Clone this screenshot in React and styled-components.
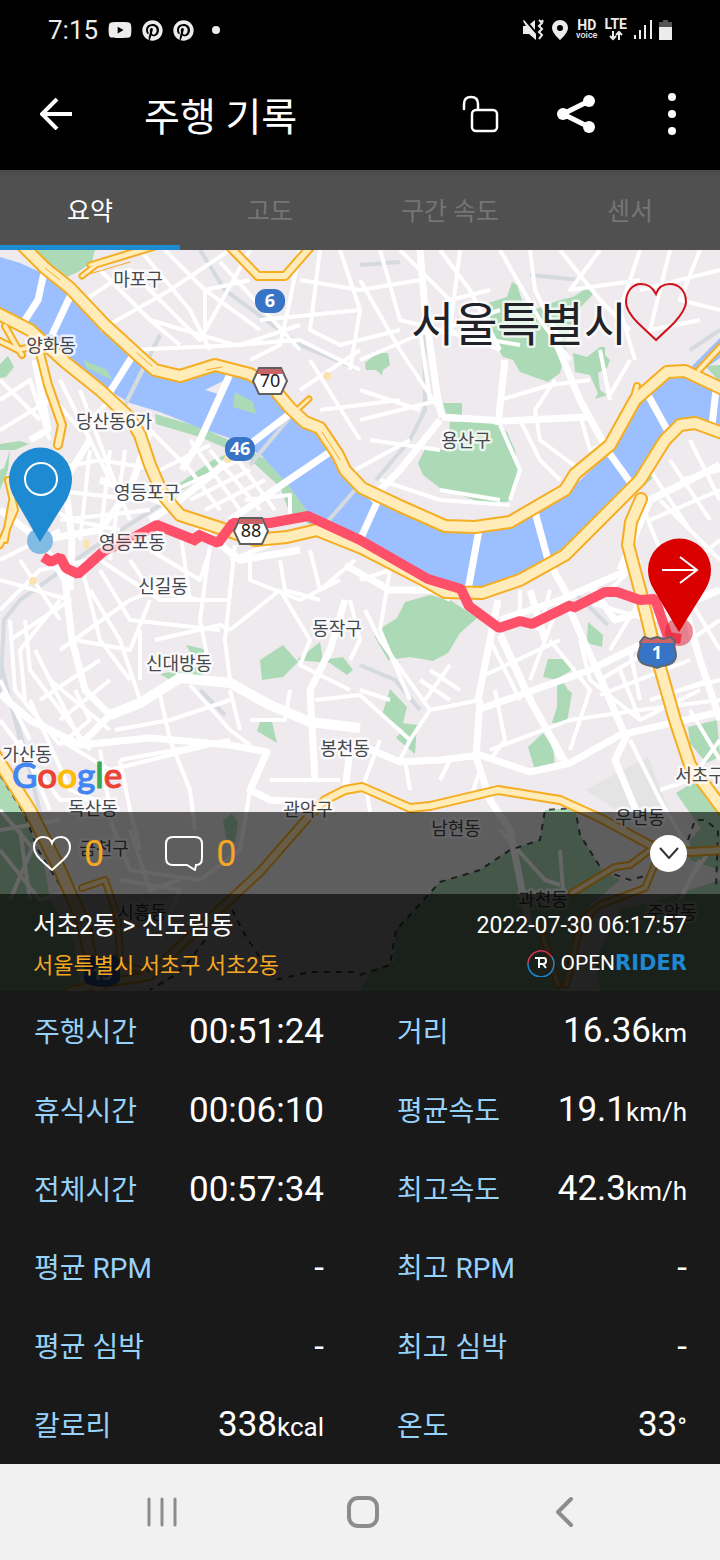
import React from "react";
import styled, { createGlobalStyle } from "styled-components";
import { FaPinterest, FaYoutube } from "react-icons/fa";

const GlobalStyle = createGlobalStyle`
  *, *::before, *::after { box-sizing: border-box; }
  body {
    margin: 0;
    background: #191919;
    color: #fff;
    font-family: Roboto, "Noto Sans CJK KR", sans-serif;
  }
  button { font: inherit; color: inherit; background: none; border: 0; padding: 0; cursor: pointer; }
  svg { display: block; }
`;

const Page = styled.div`
  min-height: 100vh;
  display: flex;
  flex-direction: column;
`;

/* ---------- status bar ---------- */

const StatusBar = styled.div`
  height: 60px;
  padding: 0 48px;
  display: flex;
  align-items: center;
  justify-content: space-between;
  background: #000;
  color: #ececec;
`;

const StatusGroup = styled.div`
  display: flex;
  align-items: center;
  gap: ${(p) => p.$gap}px;
`;

const Clock = styled.span`
  font-size: 26px;
  line-height: 32px;
`;

const Dot = styled.span`
  width: 8px;
  height: 8px;
  margin-left: 8px;
  border-radius: 50%;
  background: currentColor;
`;

const NetBadge = styled.span`
  display: flex;
  flex-direction: column;
  align-items: center;
  font-size: 14px;
  line-height: 11px;
  font-weight: 700;
`;

const NetSmall = styled.span`
  font-size: 9px;
  line-height: 9px;
  font-weight: 500;
`;

/* ---------- app bar ---------- */

const AppBar = styled.header`
  height: 110px;
  padding-bottom: 2px;
  display: flex;
  align-items: center;
  background: #000;
`;

const BarButton = styled.button`
  width: ${(p) => p.$width || 96}px;
  height: 96px;
  display: flex;
  align-items: center;
  justify-content: center;
`;

const Title = styled.h1`
  flex: 1;
  margin: 0;
  padding: 8px 0 0 32px;
  font-size: 39px;
  line-height: 56px;
  font-weight: 400;
`;

/* ---------- tabs ---------- */

const Tabs = styled.nav`
  display: grid;
  grid-template-columns: repeat(4, 1fr);
  height: 80px;
  background: linear-gradient(#4a4a4a, #505050 8px);
`;

const Tab = styled.button`
  padding-top: 9px;
  font-size: 25px;
  line-height: 32px;
  color: ${(p) => (p.$active ? "#fff" : "#757575")};
  border-bottom: 5px solid ${(p) => (p.$active ? "#1d8bd1" : "transparent")};
`;

/* ---------- map ---------- */

const MapSection = styled.section`
  position: relative;
  padding-top: 562px;
  overflow: hidden;
`;

const MapCanvas = styled.svg`
  position: absolute;
  inset: 0;
  width: 100%;
  height: 100%;
`;

const ActionBar = styled.div`
  position: relative;
  height: 82px;
  padding: 0 33px;
  display: flex;
  align-items: center;
  gap: 61px;
  background: rgba(0, 0, 0, 0.6);
`;

const CountButton = styled.button`
  display: flex;
  align-items: center;
  gap: 13px;
  color: #f5a623;
  font-size: 36px;
`;

const Count = styled.span`
  padding-top: 2px;
  line-height: 44px;
`;

const CollapseButton = styled.button`
  width: 37px;
  height: 37px;
  margin-left: auto;
  display: grid;
  place-items: center;
  border-radius: 50%;
  background: #fff;
`;

const RideInfo = styled.div`
  position: relative;
  height: 97px;
  padding: 12px 33px 5px;
  display: flex;
  flex-direction: column;
  background: rgba(0, 0, 0, 0.85);
`;

const InfoRow = styled.div`
  flex: 1;
  display: flex;
  align-items: center;
  justify-content: space-between;
`;

const Course = styled.span`
  font-size: 25px;
  line-height: 36px;
`;

const RideDate = styled.time`
  font-size: 23px;
  line-height: 36px;
`;

const Address = styled.span`
  font-size: 22px;
  line-height: 32px;
  color: #f5a623;
`;

const Brand = styled.span`
  display: flex;
  align-items: center;
  padding-bottom: 6px;
  font-size: 21px;
  line-height: 28px;
`;

const BrandOpen = styled.span`
  margin-left: 5px;
`;

const BrandRider = styled.span`
  font-family: "DejaVu Sans", sans-serif;
  font-weight: 700;
  color: #1e88d2;
`;

/* ---------- stats ---------- */

const Stats = styled.dl`
  flex: 1;
  margin: 0;
  padding: 0 33px 0 34px;
  display: grid;
  grid-template-columns: 1fr 1fr;
  grid-auto-rows: minmax(64px, 1fr);
  column-gap: 73px;
  background: #191919;
`;

const Stat = styled.div`
  display: flex;
  align-items: center;
  justify-content: space-between;
  padding-top: 3px;
`;

const StatLabel = styled.dt`
  padding-top: 2px;
  font-size: 28px;
  line-height: 40px;
  color: #97d2fb;
`;

const StatValue = styled.dd`
  margin: 0;
  font-size: 35px;
  line-height: 44px;
`;

const Unit = styled.span`
  font-size: 26px;
`;

/* ---------- system navigation ---------- */

const SystemNav = styled.nav`
  height: 96px;
  padding: 0 55px 0 61px;
  display: grid;
  grid-template-columns: repeat(3, 1fr);
  background: #f1f1f1;
`;

const NavButton = styled.button`
  display: grid;
  place-items: center;
`;

/* ---------- map data ---------- */

const PARKS = [
  "26,250 95,250 92,262 78,272 60,280 42,262",
  "450,422 493,421 507,432 515,450 518,470 513,497 507,502 483,503 440,488 423,475 418,463 425,449 448,450",
  "512,282 517,285 522,300 533,310 560,300 573,297 587,288 595,292 580,308 577,317 567,337 565,353 560,373 548,382 520,372 513,360 503,357 493,340 488,303 507,297",
  "365,363 377,353 388,353 390,365 383,370 382,375 376,370 366,370",
  "443,403 462,403 462,417 447,417",
  "573,353 587,357 600,347 605,347 605,355 610,360 607,368 598,373 600,390 607,395 595,399 598,393 590,375 575,372",
  "155,414 200,427 233,442 260,457 287,483 308,512 290,514 280,487 247,457 200,437 156,424",
  "180,483 213,460 230,453 200,480 182,490",
  "375,632 397,618 405,602 430,595 450,600 477,618 460,633 448,653 433,661 410,657 388,660 375,637",
  "390,689 407,707 403,723 417,725 415,754 396,738 403,730 382,715",
  "548,659 567,659 572,670 560,677 568,690 572,693 567,722 552,723 557,707 557,680 543,677",
  "588,622 603,635 602,647 587,643",
  "543,733 553,747 555,767 535,770 528,747",
  "688,727 717,720 720,757 706,763 690,743",
  "676,793 697,780 720,803 720,830 702,830",
  "186,645 208,650 200,655 190,652",
  "160,674 200,666 204,677 172,681",
  "260,660 283,645 298,662 283,677 262,680",
  "297,660 320,642 323,660 343,657 353,670 347,675 330,663",
  "260,722 272,722 277,743 257,731",
  "0,364 8,356 14,367 6,377 0,378",
  "0,444 20,441 29,444 15,450 0,450",
  "10,450 4,468 0,470 0,490 8,470",
  "0,775 25,815 45,870 50,900 72,935 82,991 0,991",
  "223,820 232,814 238,822 235,843 226,838",
  "370,972 394,962 396,930 420,905 440,882 480,870 510,850 540,840 545,810 575,808 580,835 602,870 620,880 590,905 560,991 360,991",
  "620,910 660,900 720,880 720,991 600,991 595,960",
  "690,840 710,818 720,825 720,870 690,860",
  "705,366 720,365 720,382",
];

const RIVER =
  "0,257 20,263 40,272 60,282 80,300 130,347 148,370 180,380 220,368 250,380 275,398 290,415 318,432 338,465 358,490 400,510 445,530 475,530 510,525 570,490 612,450 635,405 667,376 690,378 720,392 720,428 692,420 674,432 650,470 600,518 562,548 520,574 482,588 455,586 425,574 360,536 310,515 290,487 262,456 235,440 200,428 160,412 130,403 100,385 65,355 30,328 0,313";

const MAIN_ROADS = [
  "45,268 38,300 25,320", "73,290 52,335", "135,352 108,395", "230,374 200,440 182,470",
  "292,412 240,452 180,500 150,520", "330,452 280,486 230,520", "378,500 360,540", "479,530 468,590",
  "535,512 548,560 570,600", "607,450 630,482", "648,395 670,435", "716,390 712,425",
  "420,250 425,310 438,400 442,417", "505,360 498,425", "442,417 505,421 590,417", "555,340 580,400 610,455",
  "0,510 40,540 65,580 72,640 85,690 110,715 140,703 180,678 230,683 270,705 310,722 360,728",
  "70,590 72,540 65,480 90,440", "110,715 80,745 30,720 0,694", "80,745 150,738 230,745",
  "230,745 267,752 250,790 270,800 310,802", "345,600 330,650 310,690 315,780",
  "360,745 400,762 440,760 480,755 530,772 570,763 620,735 720,712",
  "480,700 476,757 490,800 510,830 520,880 530,930", "477,710 520,695 590,670 640,645",
  "500,635 530,700 567,765", "570,610 610,700 625,735", "590,585 615,620 650,610",
  "627,735 615,760 640,820", "720,590 650,620 690,600 720,590", "680,590 700,660 720,720",
  "498,600 490,640 478,700", "500,620 560,600 640,565", "530,590 545,640", "35,360 48,430 30,440",
  "150,430 130,490 100,530 40,540", "370,500 400,470 440,420", "350,750 345,790",
  "100,480 170,505 240,560 300,550", "460,590 390,590 345,565", "720,465 650,500 620,570",
];

const ROADS = [
  "85,300 130,270 200,340 250,250", "100,330 170,290 230,250", "140,250 190,310 210,350",
  "100,270 150,320 180,345", "150,320 235,345 300,340 360,370", "130,350 240,345 300,325",
  "165,250 205,290 260,330", "205,330 205,290 250,280", "220,262 300,350", "300,250 290,300 280,345 250,360",
  "260,320 360,310", "320,250 310,330 340,345 400,330", "300,280 360,290 420,280", "340,250 360,310 350,370",
  "360,280 400,350 440,410", "380,250 400,320 440,330 500,310", "400,250 450,300 490,290", "440,250 470,290 500,350",
  "460,250 450,330 500,350", "500,250 540,320 570,360", "530,250 535,290 560,340", "560,250 600,300 630,330",
  "600,250 570,290 640,280", "640,250 620,310 635,360", "670,250 650,330 700,320", "720,270 640,290", "700,250 680,300 720,310",
  "360,360 430,330 520,345", "360,390 420,410", "360,420 440,400", "370,440 440,450", "355,470 410,440", "310,360 360,440",
  "300,390 360,350", "320,410 400,400", "500,400 550,385 590,380", "555,380 535,410 540,440 580,470",
  "520,420 540,460 560,480", "500,425 520,470 510,500", "600,350 610,400", "580,415 590,450 615,440", "610,395 630,360",
  "420,330 430,400", "440,490 500,500", "380,480 440,500 510,505",
  "0,400 30,380 50,440", "0,430 50,400", "0,380 40,420", "60,380 110,480", "80,390 110,470 130,520",
  "55,400 80,430 110,400", "50,470 100,460 160,470", "50,490 140,500", "60,520 150,510", "90,450 80,540", "110,450 100,540",
  "125,450 110,560", "40,500 70,520 120,530", "150,430 190,470 220,510", "160,470 210,445", "175,490 240,460",
  "190,500 250,470", "205,510 265,480", "190,440 240,510", "210,450 260,510", "230,450 275,510", "245,500 290,495 290,515",
  "0,560 60,530", "0,580 70,600 10,640", "20,560 60,620", "0,610 40,570 90,560", "10,620 15,690 60,745", "25,620 30,670 90,750",
  "60,600 20,650 25,700", "80,560 100,640 130,680", "90,590 120,640 140,700", "100,570 130,620 220,630", "60,650 130,600 180,580",
  "75,640 130,650 150,600", "100,560 160,600 230,600", "130,560 150,590 200,600", "150,550 200,580 210,550", "140,630 140,680",
  "155,640 220,625 230,630", "210,545 200,620 210,670", "180,530 190,600", "235,545 225,640 230,680", "250,550 250,580 300,600 340,580",
  "280,590 230,630", "280,590 310,640 300,665 350,690", "280,560 285,590 320,600", "310,550 320,590 355,560", "270,545 230,560",
  "50,680 110,730", "60,720 110,680", "75,690 90,720 60,745", "40,700 100,660", "35,650 80,740", "115,730 170,720 230,700",
  "60,740 110,770 230,740", "120,760 230,740", "120,760 130,810 140,850", "160,695 170,740 190,790 195,830", "100,750 110,810",
  "190,685 230,730 250,745", "230,690 240,730", "290,690 285,720 250,720", "315,700 360,695 410,740", "350,600 360,640 350,660",
  "270,780 340,780", "250,790 240,850 200,880", "0,720 60,800 100,800", "20,740 50,810", "30,700 70,790 120,810", "0,680 30,740",
  "360,580 390,570 380,630 410,700", "365,610 380,640 430,710 480,700", "375,560 450,600", "430,670 460,690", "420,680 450,700", "450,665 425,700",
  "430,710 410,740 400,760", "360,690 390,700", "380,740 365,780 370,812", "405,760 410,790", "450,760 440,780",
  "485,675 560,640", "490,640 520,700", "500,630 560,760", "495,690 505,740 490,760", "490,750 570,720 640,710 720,700", "530,680 560,600",
  "520,590 520,620 540,630 550,590", "550,640 590,690 570,750", "580,640 590,680 640,720", "600,600 640,560", "580,600 650,620", "640,600 610,650",
  "620,670 640,720 700,690", "600,695 690,660", "600,680 650,650", "630,650 640,700", "660,690 680,720", "650,700 710,680", "690,640 720,620",
  "695,560 720,540", "650,520 720,490", "660,500 720,560", "650,470 690,530", "670,460 710,520", "690,440 720,500", "680,480 720,470",
  "660,550 640,500", "690,600 720,650", "680,690 720,680", "690,710 720,760", "480,770 470,800", "720,740 690,780 660,790", "630,740 660,800 690,850",
  "0,830 60,820", "0,850 40,900 100,880", "20,830 30,900", "40,830 10,900", "0,810 60,880", "130,830 150,890 180,880", "110,820 130,870 200,880",
  "120,880 180,890 160,940", "500,830 545,880 560,885", "560,850 563,890", "690,880 710,850 720,845", "680,900 700,860",
];

const HIGHWAYS = [
  { w: 14, d: "M22 245L45 268 70 288 105 325 140 357 155 370 180 376 215 365 250 374 275 390 290 408 305 422 320 428 338 455 345 470 362 488 400 506 445 526 475 527 510 522 565 490 575 474 610 445 635 400 667 372 685 371 725 390" },
  { w: 14, d: "M-5 312L30 330 65 362 100 390 130 418 140 435 150 465 163 495 180 515 220 528 255 540 287 537 317 530 362 548 420 578 445 592 482 593 520 580 565 555 600 520 640 480 665 440 680 425 695 423 725 434" },
  { w: 14, d: "M641 499L631 522 628 545 640 590 655 650 675 720 690 765 725 812" },
  { w: 10, d: "M70 991L100 984 150 976 165 960 260 872 310 815 325 800 345 790 362 787 410 808 430 806 498 790 560 800 600 818 650 845 690 852 725 850" },
  { w: 14, d: "M-5 755L30 810 60 870 82 920 98 991" },
  { w: 10, d: "M38 345L48 385 62 425 58 445" },
  { w: 8, d: "M5 326L14 342 22 355" },
  { w: 8, d: "M0 341L18 350 40 345" },
  { w: 10, d: "M228 245L258 276 285 276 312 245" },
  { w: 7, d: "M82 276L96 265 155 247" },
  { w: 7, d: "M90 265L145 248" },
  { w: 8, d: "M699 370L725 342" },
  { w: 8, d: "M637 386L633 400" },
  { w: 7, d: "M299 408L309 399" },
  { w: 8, d: "M0 545L15 510 8 480M5 540L14 490" },
  { w: 8, d: "M572 893L615 867 630 865 650 850M575 925L600 905 645 888 658 857M566 985L578 935 590 915M541 930L558 985" },
  { w: 8, d: "M82 888L105 880 118 918 120 960M145 972L118 962 100 991" },
];

const BORDERS = [
  "M0 775L25 815 38 850 60 885 90 920 100 991",
  "M360 975L390 965 396 930 440 882 480 870 510 850 540 840 545 810 575 808 580 835 602 870 630 880 655 873",
  "M232 910L245 935 275 980 310 972 360 972M205 940L190 960 175 975 150 990",
  "M688 840L695 820 705 820 718 830 716 890",
];

const RAILWAYS = [
  "0,700 4,620 20,600 90,550 160,505", "12,700 40,812", "200,250 225,290 300,345 360,370", "160,335 125,405",
  "424,300 425,410 410,440 376,480", "290,417 250,465", "355,490 320,530", "0,660 10,700 20,740", "360,665 395,680 420,710", "200,690 225,715",
  "360,265 400,262", "530,275 580,280", "690,350 720,330", "577,595 608,625",
];

const ROUTE =
  "M43 557L51 562 60 557 66 568 78 574 104 551 133 538 157 525 197 541 197 534 218 543 233 523 270 523 308 516 360 540 428 579 461 589 469 606 499 628 520 621 532 624 571 605 573 608 605 592 617 592 640 600 655 599 668 637 681 639";

const PLACES = [
  [138, 286, "마포구"], [51, 352, "양화동"], [114, 428, "당산동6가"], [147, 499, "영등포구"],
  [132, 549, "영등포동"], [163, 593, "신길동"], [337, 635, "동작구"], [179, 670, "신대방동"],
  [345, 755, "봉천동"], [27, 761, "가산동"], [93, 815, "독산동"], [308, 816, "관악구"],
  [456, 835, "남현동"], [640, 824, "우면동"], [104, 855, "금천구"], [142, 919, "시흥동"],
  [543, 906, "과천동"], [672, 919, "주암동"], [700, 782, "서초구"], [466, 447, "용산구"],
];

const Label = styled.text`
  font-family: "Noto Sans CJK KR", sans-serif;
  font-size: ${(p) => p.$size || 18}px;
  fill: ${(p) => (p.$size ? "#202227" : "#44474e")};
  stroke: rgba(255, 255, 255, 0.75);
  stroke-width: 5px;
  stroke-linejoin: round;
  paint-order: stroke;
  text-anchor: middle;
`;

const ShieldText = styled.text`
  font-family: "Noto Sans", sans-serif;
  font-size: 18px;
  font-weight: ${(p) => (p.$dark ? 400 : 700)};
  fill: ${(p) => (p.$dark ? "#222" : "#fff")};
  text-anchor: middle;
`;

const Logo = styled.text`
  font-family: Lato, sans-serif;
  font-size: 35px;
  font-weight: 500;
`;

const LogoLetter = styled.tspan`
  fill: ${(p) => p.$color};
  stroke: ${(p) => p.$color};
  stroke-width: 1px;
`;

const LOGO_LETTERS = [
  ["G", "#4285f4"], ["o", "#ea4335"], ["o", "#fbbc05"], ["g", "#4285f4"], ["l", "#34a853"], ["e", "#ea4335"],
];

function OvalShield({ x, y, children }) {
  return (
    <g>
      <rect x={x - 15} y={y - 12} width="30" height="24" rx="11" fill="#3874c6" />
      <ShieldText x={x} y={y + 6}>{children}</ShieldText>
    </g>
  );
}

function HexShield({ x, y, children }) {
  return (
    <g>
      <g transform={`translate(${x} ${y})`}>
        <path d="M-17 0L-11 -13H11L17 0 11 13H-11Z" fill="#fff" stroke="#606060" strokeWidth="2" />
        <path d="M-13 -7L-11 -12H11L13 -7Z" fill="#cb6466" />
      </g>
      <ShieldText $dark x={x} y={y + 6}>{children}</ShieldText>
    </g>
  );
}

function RideMap() {
  return (
    <MapCanvas viewBox="0 250 720 741" preserveAspectRatio="xMidYMid slice" role="img" aria-label="주행 경로 지도">
      <rect y="250" width="720" height="741" fill="#eeeaee" />
      <path d="M585 790L648 757 670 812 620 812Z" fill="#e4e4e4" />
      {PARKS.map((p) => <polygon key={p} points={p} fill="#acdab6" />)}
      <polyline points="230,444 262,462 290,492 310,520 425,578 482,590 562,552 650,475" fill="none" stroke="#acdab6" strokeWidth="8" />
      <polygon points={RIVER} fill="#9cc0ff" />
      <polygon points="690,368 720,338 720,358 700,372" fill="#9cc0ff" />
      <polygon points="83,360 107,370 112,380 87,368" fill="#acdab6" />
      <polygon points="235,392 253,402 256,414 233,407" fill="#acdab6" />
      <polygon points="205,390 225,380 218,394" fill="#eeeaee" />
      <g fill="none" stroke="#d5dade" strokeWidth="4">
        {RAILWAYS.map((p) => <polyline key={p} points={p} />)}
      </g>
      <g fill="none" stroke="#fff" strokeLinejoin="round">
        <g strokeWidth="4">{ROADS.map((p) => <polyline key={p} points={p} />)}</g>
        <g strokeWidth="7">{MAIN_ROADS.map((p) => <polyline key={p} points={p} />)}</g>
        <path d="M110 715L140 703 180 678 230 683 270 705 310 722 360 728" strokeWidth="10" />
      </g>
      <g fill="none" stroke="#454b52" strokeWidth="2" strokeDasharray="6 6">
        {BORDERS.map((d) => <path key={d} d={d} />)}
      </g>
      <g fill="none" strokeLinejoin="round" strokeLinecap="round">
        {HIGHWAYS.map((h) => <path key={h.d} d={h.d} stroke="#f6ad22" strokeWidth={h.w} />)}
        {HIGHWAYS.map((h) => <path key={h.d} d={h.d} stroke="#ffecb8" strokeWidth={h.w - 4} />)}
        <path d="M137 353L152 366M206 370L222 367M322 432L340 460M86 275L130 262M45 268L60 280" stroke="#f6ad22" strokeWidth="1" />
      </g>
      <g fill="#fbe3b0">
        <circle cx="327" cy="376" r="4" /><circle cx="228" cy="459" r="4" />
        <circle cx="33" cy="581" r="4" /><rect x="84" y="540" width="5" height="8" />
      </g>

      <circle cx="40" cy="541" r="13" fill="#81bbe4" />
      <path d={ROUTE} fill="none" stroke="#ff5069" strokeWidth="10" strokeLinejoin="bevel" />

      {PLACES.map(([x, y, name]) => <Label key={name} x={x} y={y}>{name}</Label>)}
      <Label $size={47} x="519" y="341">서울특별시</Label>

      <OvalShield x={270} y={301}>6</OvalShield>
      <OvalShield x={240} y={449}>46</OvalShield>
      <HexShield x={270} y={381}>70</HexShield>
      <HexShield x={251} y={531}>88</HexShield>
      <path d="M85 958L90 955 102 958 114 955 120 960 120 980Q118 986 102 987Q86 986 84 980Z" fill="#3874c6" />
      <ShieldText x="102" y="980">15</ShieldText>
      <circle cx="679" cy="632" r="14" fill="#d9182e" fillOpacity="0.5" />
      <path d="M640 642L644 637 650 639 657 637 664 639 671 637 675 642C673 646 676 650 676 656Q675 665 662 666L657 668 652 666Q639 665 638 656C638 650 642 646 640 642Z" fill="#3874c6" stroke="#5e6670" strokeWidth="2" />
      <path d="M641 642L645 638 651 640 657 638 663 640 670 638 674 642 673 643H642Z" fill="#cb6466" />
      <ShieldText x="657" y="659">1</ShieldText>

      <path d="M40 542L15 499C11 492 9 486 9 479A31 31 0 0 1 72 479C72 486 70 492 67 499Z" fill="#1e8ad1" />
      <circle cx="41" cy="479" r="16" fill="none" stroke="#fff" strokeWidth="2" />
      <path d="M679 632L654 590C650 583 648 577 648 570A31 31 0 0 1 711 570C711 577 709 583 705 590Z" fill="#db0000" />
      <path d="M662 570H697M680 557L697 570 680 583" fill="none" stroke="#fff" strokeWidth="2" />
      <path d="M656 340L638 323C629 314 626 308 626 302C626 291 633 284 641 284C648 284 653 288 656 294C658 288 663 284 670 284C679 284 686 291 686 302C686 308 682 314 674 323Z" fill="none" stroke="#d0101c" strokeWidth="2" />

      <Logo x="12" y="788">
        {LOGO_LETTERS.map(([letter, color], i) => <LogoLetter key={i} $color={color}>{letter}</LogoLetter>)}
      </Logo>
    </MapCanvas>
  );
}

const TABS = ["요약", "고도", "구간 속도", "센서"];

const STATS = [
  ["주행시간", "00:51:24"], ["거리", "16.36", "km"],
  ["휴식시간", "00:06:10"], ["평균속도", "19.1", "km/h"],
  ["전체시간", "00:57:34"], ["최고속도", "42.3", "km/h"],
  ["평균 RPM", "-"], ["최고 RPM", "-"],
  ["평균 심박", "-"], ["최고 심박", "-"],
  ["칼로리", "338", "kcal"], ["온도", "33", "°"],
];

export default function App() {
  return (
    <Page>
      <GlobalStyle />
      <StatusBar>
        <StatusGroup $gap={10}>
          <Clock>7:15</Clock>
          <FaYoutube size={24} />
          <FaPinterest size={21} />
          <FaPinterest size={21} />
          <Dot />
        </StatusGroup>
        <StatusGroup $gap={7}>
          <svg width="22" height="22" viewBox="0 0 22 22" fill="currentColor">
            <path d="M1 7H4L1 2 2 1 14 15V21L7 15H1ZM8 5L13 1V11Z" />
            <path d="M17 1L20 4 17 7 20 10 17 13 20 16 17 20M20 1L21 3" fill="none" stroke="currentColor" strokeWidth="2" />
          </svg>
          <svg width="18" height="22" viewBox="0 0 18 22" fill="currentColor">
            <path fillRule="evenodd" d="M9 1A8 8 0 0 1 17 9C17 14 9 21 9 21S1 14 1 9A8 8 0 0 1 9 1ZM9 6A3 3 0 1 0 9 12A3 3 0 1 0 9 6Z" />
          </svg>
          <NetBadge>
            HD
            <NetSmall>voice</NetSmall>
          </NetBadge>
          <NetBadge>
            LTE
            <svg width="14" height="11" viewBox="0 0 14 11" fill="none" stroke="currentColor" strokeWidth="2">
              <path d="M4 1V9M1 6L4 9 7 6M10 10V2M7 5L10 2 13 5" />
            </svg>
          </NetBadge>
          <svg width="18" height="20" viewBox="0 0 18 20" fill="currentColor">
            <path d="M0 15H2V19H0ZM5 10H7V19H5ZM10 5H12V19H10ZM16 0H18V19H16Z" />
          </svg>
          <svg width="13" height="22" viewBox="0 0 13 22">
            <path d="M4 1H9V3H13V9H0V3H4Z" fill="#555" />
            <path d="M0 8H13V21H0Z" fill="currentColor" />
          </svg>
        </StatusGroup>
      </StatusBar>

      <AppBar>
        <BarButton $width={112} aria-label="뒤로">
          <svg width="32" height="32" viewBox="0 0 32 32" fill="none" stroke="#fff" strokeWidth="4">
            <path d="M32 16H3M17 1L2 16 17 31" />
          </svg>
        </BarButton>
        <Title>주행 기록</Title>
        <BarButton aria-label="잠금 해제">
          <svg width="38" height="38" viewBox="0 0 38 38" fill="none" stroke="#fff" strokeWidth="2.5" strokeLinecap="round">
            <path d="M3 14V9C3 4 6 2 10 2S17 4 17 9V14" />
            <rect x="11" y="15" width="25" height="21" rx="4" />
          </svg>
        </BarButton>
        <BarButton aria-label="공유">
          <svg width="38" height="38" viewBox="0 0 38 38" fill="#fff">
            <path d="M32 6L6 19 32 32" fill="none" stroke="#fff" strokeWidth="5" />
            <circle cx="32" cy="6" r="6" /><circle cx="6" cy="19" r="6" /><circle cx="32" cy="32" r="6" />
          </svg>
        </BarButton>
        <BarButton aria-label="더보기">
          <svg width="8" height="42" viewBox="0 0 8 42" fill="#fff">
            <circle cx="4" cy="4" r="4" /><circle cx="4" cy="21" r="4" /><circle cx="4" cy="38" r="4" />
          </svg>
        </BarButton>
      </AppBar>

      <Tabs>
        {TABS.map((name, i) => (
          <Tab key={name} $active={i === 0} aria-current={i === 0 ? "page" : undefined}>{name}</Tab>
        ))}
      </Tabs>

      <MapSection>
        <RideMap />
        <ActionBar>
          <CountButton aria-label="좋아요 0">
            <svg width="38" height="35" viewBox="0 0 38 35" fill="none" stroke="#fff" strokeWidth="2">
              <path d="M19 34L7 23C3 19 1 15 1 11C1 5 5 1 10 1C15 1 18 4 19 7C20 4 23 1 28 1C33 1 37 5 37 11C37 15 35 19 31 23Z" />
            </svg>
            <Count>0</Count>
          </CountButton>
          <CountButton aria-label="댓글 0">
            <svg width="38" height="35" viewBox="0 0 38 35" fill="none" stroke="#fff" strokeWidth="2">
              <path d="M8 1H30Q37 1 37 8V22Q37 29 31 29L30 34 22 29H8Q1 29 1 22V8Q1 1 8 1Z" />
            </svg>
            <Count>0</Count>
          </CountButton>
          <CollapseButton aria-label="접기">
            <svg width="20" height="12" viewBox="0 0 20 12" fill="none" stroke="#333" strokeWidth="2">
              <path d="M1 1L10 11 19 1" />
            </svg>
          </CollapseButton>
        </ActionBar>
        <RideInfo>
          <InfoRow>
            <Course>서초2동 &gt; 신도림동</Course>
            <RideDate dateTime="2022-07-30T06:17:57">2022-07-30 06:17:57</RideDate>
          </InfoRow>
          <InfoRow>
            <Address>서울특별시 서초구 서초2동</Address>
            <Brand>
              <svg width="28" height="28" viewBox="0 0 28 28" fill="none" strokeWidth="1.5">
                <path d="M1 14A13 13 0 0 1 25 8" stroke="#d8334f" />
                <path d="M25 8A13 13 0 1 1 1 14" stroke="#1e88d2" />
                <path d="M8 9H17Q19 9 19 12T16 15L19 19M12 9V19M12 15H16" stroke="#fff" strokeWidth="2" />
              </svg>
              <BrandOpen>OPEN</BrandOpen>
              <BrandRider>RIDER</BrandRider>
            </Brand>
          </InfoRow>
        </RideInfo>
      </MapSection>

      <Stats>
        {STATS.map(([label, value, unit]) => (
          <Stat key={label}>
            <StatLabel>{label}</StatLabel>
            <StatValue>
              {value}
              {unit && <Unit>{unit}</Unit>}
            </StatValue>
          </Stat>
        ))}
      </Stats>

      <SystemNav>
        <NavButton aria-label="최근 앱">
          <svg width="30" height="32" viewBox="0 0 30 32" stroke="#8c8c8c" strokeWidth="3" strokeLinecap="round">
            <path d="M2 3V29M15 3V29M28 3V29" />
          </svg>
        </NavButton>
        <NavButton aria-label="홈">
          <svg width="32" height="32" viewBox="0 0 32 32" fill="none" stroke="#8c8c8c" strokeWidth="4">
            <rect x="2" y="2" width="28" height="28" rx="9" />
          </svg>
        </NavButton>
        <NavButton aria-label="이전">
          <svg width="18" height="32" viewBox="0 0 18 32" fill="none" stroke="#8c8c8c" strokeWidth="4" strokeLinecap="round" strokeLinejoin="round">
            <path d="M16 3L3 16 16 29" />
          </svg>
        </NavButton>
      </SystemNav>
    </Page>
  );
}
